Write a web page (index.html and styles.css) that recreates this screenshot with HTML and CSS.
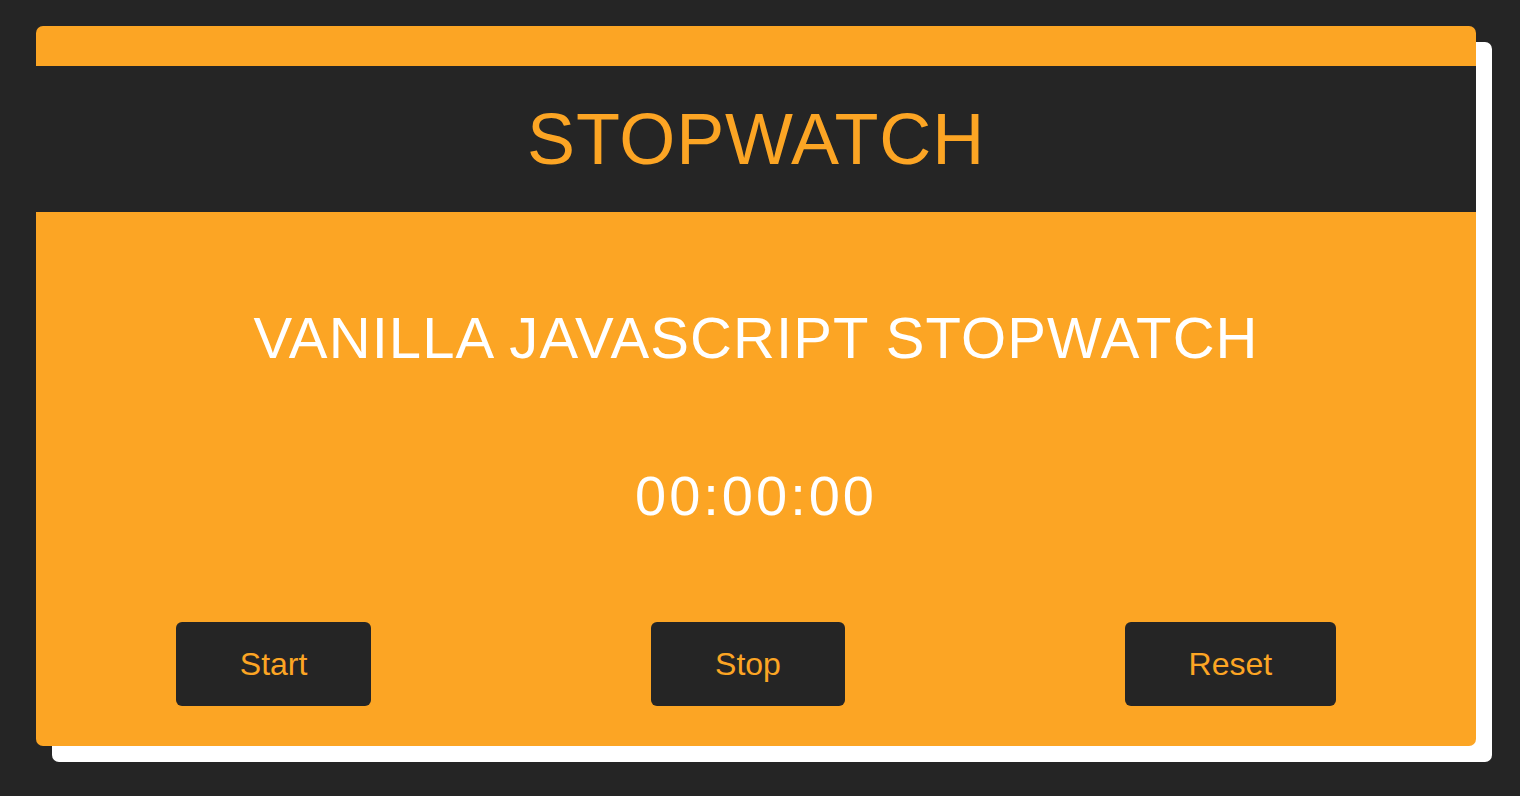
FILE: index.html
```html
<!DOCTYPE html>
<html lang="en">
<head>
<meta charset="utf-8">
<title>Stopwatch</title>
<link rel="stylesheet" href="styles.css">
</head>
<body>
  <main class="card">
    <header class="card-header">
      <h1 class="title">STOPWATCH</h1>
    </header>
    <section class="card-body">
      <h2 class="subtitle">VANILLA JAVASCRIPT STOPWATCH</h2>
      <p class="time">00:00:00</p>
      <div class="controls">
        <button class="btn">Start</button>
        <button class="btn">Stop</button>
        <button class="btn">Reset</button>
      </div>
    </section>
  </main>
</body>
</html>
```

FILE: styles.css
```css
* {
  box-sizing: border-box;
}

html, body {
  margin: 0;
  padding: 0;
  background: #252525;
}

body {
  font-family: "Liberation Sans", Arial, Helvetica, sans-serif;
  padding: 26px 36px;
  min-height: 796px;
}

.card {
  width: 1440px;
  background: #fca524;
  border-radius: 7px;
  box-shadow: 16px 16px 0 #ffffff;
  padding-top: 40px;
}

.card-header {
  background: #252525;
  height: 146px;
  text-align: center;
}

.title {
  margin: 0;
  font-size: 72px;
  font-weight: 400;
  line-height: 146px;
  color: #fca524;
  letter-spacing: 0.8px;
}

.card-body {
  display: flex;
  flex-direction: column;
  align-items: center;
  padding: 93px 0 40px;
}

.subtitle {
  margin: 0 0 93px;
  font-size: 58px;
  font-weight: 400;
  line-height: 66px;
  color: #ffffff;
  letter-spacing: 1.1px;
}

.time {
  margin: 0 0 94px;
  font-size: 56px;
  line-height: 64px;
  color: #ffffff;
  letter-spacing: 3px;
}

.controls {
  align-self: stretch;
  display: flex;
  justify-content: space-around;
}

.btn {
  font-family: "Liberation Sans", Arial, Helvetica, sans-serif;
  font-size: 32px;
  line-height: 36px;
  padding: 24px 64px;
  background: #252525;
  color: #fca524;
  border: none;
  border-radius: 6px;
  cursor: pointer;
}
```
